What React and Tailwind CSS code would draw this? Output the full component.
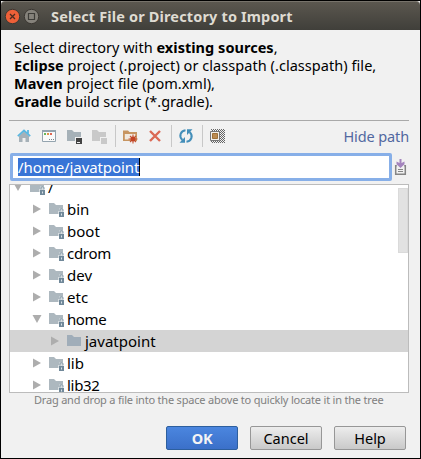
import React from "react";

function Folder({ locked, fill = "#adb8bf" }) {
  return (
    <svg width="16" height="16" viewBox="0 0 16 16" className="shrink-0">
      <path d="M0 2h5l2 2h7v9H0z" fill={fill} />
      {locked && (
        <g>
          <path d="M9 10h1V7.5h5V10h1v6H9z" fill="#fff" opacity=".5" />
          <path d="M11 10.5V8.8q0-1 1.5-1t1.5 1v1.7" fill="none" stroke="#7d93a2" />
          <path d="M10 11h5v5h-5z" fill="#71899a" />
          <path d="M12 12.5h1v2h-1z" fill="#dbe3e8" />
        </g>
      )}
    </svg>
  );
}

function Arrow({ open }) {
  return (
    <svg width="10" height="10" viewBox="0 0 10 10" className="shrink-0">
      <path d={open ? "M.5 1h9L5 9z" : "M1 .5v9L9 5z"} fill="#adadad" />
    </svg>
  );
}

function Row({ name, open, pad = "pl-[22px]", selected, locked = true, tracking = "tracking-normal" }) {
  return (
    <div className={`flex h-[22px] shrink-0 items-center ${pad} ${selected ? "bg-[#d4d4d4]" : ""}`}>
      <Arrow open={open} />
      <span className="ml-[7px] flex"><Folder locked={locked} fill={selected ? "#a0adb9" : "#adb8bf"} /></span>
      <span className={`ml-[2px] text-[15px] leading-[22px] ${tracking}`}>{name}</span>
    </div>
  );
}

const Divider = ({ className }) => <div className={`h-[22px] w-px shrink-0 bg-[#c8c8c8] ${className}`} />;

function Toolbar() {
  return (
    <div className="flex h-[30px] items-center pl-[8px]">
      <svg width="16" height="16" viewBox="0 0 16 16" className="-ml-px shrink-0">
        <path d="M3 8l5-4.5L13 8v6H9.5v-4h-3v4H3z" fill="#a6b1b8" />
        <path d="M1.8 8.2L8 2.5l6.2 5.7M12 2v4" fill="none" stroke="#5ab7e0" strokeWidth="1.8" />
      </svg>
      <svg width="16" height="16" viewBox="0 0 16 16" className="ml-[9px] shrink-0">
        <path d="M1.5 2.5h13v11h-13z" fill="#fafafa" stroke="#94a4af" />
        <path d="M1 2h14v2H1z" fill="#94a4af" />
        <path d="M3 5h2v2H3z" fill="#68b85e" />
        <path d="M6 5h2v2H6z" fill="#e39146" />
        <path d="M9 5h2v2H9z" fill="#df6753" />
        <path d="M8 11h1v1H8zM10 11h1v1h-1zM12 11h1v1h-1z" fill="#7a858c" />
      </svg>
      <svg width="16" height="16" viewBox="0 0 16 16" className="ml-[9px] shrink-0">
        <path d="M1 2h5l2 2h7v5H9v4H1z" fill="#a6b1b8" />
        <path d="M10 10h6v6h-6z" fill="#424242" />
        <path d="M11 14h3v1h-3z" fill="#eee" />
      </svg>
      <svg width="16" height="16" viewBox="0 0 16 16" className="ml-[9px] shrink-0">
        <path d="M1 2h5l2 2h7v5H9v4H1z" fill="#c9c9c9" />
        <path d="M10 10h6v6h-6z" fill="#c9c9c9" />
      </svg>
      <Divider className="ml-[8px]" />
      <svg width="16" height="16" viewBox="0 0 16 16" className="ml-[6px] shrink-0">
        <path d="M1 13V2.5h5L7.5 4H15v9z" fill="#c79561" />
        <path d="M2.8 11.5V6h10.5v5.5z" fill="#f1e9df" />
        <path d="M11 6.5v9M6.5 11h9M8 8l6 6M14 8l-6 6" stroke="#c45536" strokeWidth="1.1" />
        <circle cx="11" cy="11" r="2.5" fill="#c44324" />
      </svg>
      <svg width="16" height="16" viewBox="0 0 16 16" className="ml-[9px] shrink-0">
        <path d="M3 3l10 10M13 3L3 13" stroke="#db6955" strokeWidth="2.4" />
      </svg>
      <Divider className="ml-[8px]" />
      <svg width="16" height="16" viewBox="0 0 16 16" className="ml-[6px] shrink-0">
        <path d="M7.5 2.3C2.8 2.8.3 8.2 4.4 12M8.5 13.7c4.7-.5 7.2-5.9 3.1-9.7" fill="none" stroke="#438eb9" strokeWidth="2" />
        <path d="M1.5 14.8H7V9zM14.5 1.2H9V7z" fill="#438eb9" />
      </svg>
      <Divider className="ml-[8px]" />
      <svg width="16" height="16" viewBox="0 0 16 16" className="ml-[7px] shrink-0">
        <defs>
          <pattern id="dither" width="2" height="2" patternUnits="userSpaceOnUse">
            <path d="M0 0h1v1H0zM1 1h1v1H1z" fill="#666" />
          </pattern>
        </defs>
        <path d="M1 1h14v14H1z" fill="url(#dither)" shapeRendering="crispEdges" />
        <path d="M.5 3.5h9v9h-9z" fill="#f4f1ec" stroke="#777" />
        <path d="M2.5 5.5h5v5h-5z" fill="#bd8c51" stroke="#9f7138" />
      </svg>
      <span className="ml-auto whitespace-nowrap text-[14.5px] leading-[20px] tracking-[-0.12px] text-[#5168a0]">Hide path</span>
    </div>
  );
}

export default function App() {
  return (
    <div className="flex h-[459px] w-[421px] flex-col overflow-hidden border border-black bg-[#f1f1f1] font-['Noto_Sans',sans-serif] text-black">
      <header className="flex h-[29px] shrink-0 items-center rounded-t-[4px] border-t border-[#77736b] bg-linear-to-b from-[#5b574f] to-[#403f3a] pl-[3px]">
        <svg width="36" height="17" viewBox="0 0 36 17" className="shrink-0">
          <circle cx="8.5" cy="8.5" r="7.2" fill="#ee6038" stroke="#3b3732" />
          <path d="M6 6l5 5M11 6l-5 5" stroke="#4b2b20" strokeWidth="1.3" />
          <circle cx="27.5" cy="8.5" r="7.2" fill="#85827b" stroke="#3b3732" />
          <path d="M24.5 5.5h6v6h-6z" fill="none" stroke="#3d3c38" strokeWidth="1.2" />
        </svg>
        <h1 className="ml-[11px] whitespace-nowrap text-[14.5px] font-bold leading-[20px] tracking-[0.15px] text-[#dfdbd2]">Select File or Directory to Import</h1>
      </header>
      <main className="flex flex-col pl-[8px] pr-[11px]">
        <div className="h-[91px] whitespace-nowrap border-b border-[#a9a9a9] pl-[5px] pt-[8px] text-[14.5px] leading-[18px]">
          <p className="tracking-[0.03px]">Select directory with <b>existing sources</b>,</p>
          <p className="tracking-[0.05px]"><b>Eclipse</b> project (.project) or classpath (.classpath) file,</p>
          <p>
            <b>Maven</b> project file (pom.xml),
          </p>
          <p><b>Gradle</b> build script (*.gradle).</p>
        </div>
        <Toolbar />
        <div className="mt-[2px] flex h-[28px] items-center pl-px">
          <div className="flex h-[28px] w-[382px] shrink-0 items-center rounded-[2px] border-[3px] border-[#87afe8] bg-white pl-[5px]">
            <span className="flex h-[18px] items-center border-r border-black bg-[#3874d6] text-[15px] leading-[18px] tracking-[-0.08px] text-white">/home/javatpoint</span>
          </div>
          <svg width="14" height="18" viewBox="0 0 14 18" className="ml-[2px] shrink-0">
            <path d="M2.8 7.7H1.7v8.6h9.6V7.7h-1.1" fill="none" stroke="#858585" strokeWidth="1.5" />
            <path d="M4 11.5h5M4 13.5h5" stroke="#858585" />
            <path d="M5.5 1h2v4l3-1.5v2.8L6.5 10l-4-3.7V3.5l3 1.5z" fill="#a484bd" />
          </svg>
        </div>
        <div className="relative mt-[3px] flex h-[209px] w-[400px] flex-col overflow-hidden border border-[#bcbcbc] bg-white">
          <div className="-mt-[9px] flex flex-col">
            <Row name="/" open pad="pl-[3px]" />
            <Row name="bin" />
            <Row name="boot" />
            <Row name="cdrom" tracking="tracking-[-0.3px]" />
            <Row name="dev" />
            <Row name="etc" />
            <Row name="home" open tracking="tracking-[-0.4px]" />
            <Row name="javatpoint" pad="pl-[40px]" selected locked={false} />
            <Row name="lib" />
            <Row name="lib32" tracking="tracking-[-0.3px]" />
          </div>
          <div className="absolute right-0 top-[3px] h-[65px] w-[10px] border border-[#dadada] bg-[#e2e2e2]" />
        </div>
        <p className="h-[15px] whitespace-nowrap pl-[25px] text-[11px] leading-[14px] tracking-[-0.2px] text-[#808080]">Drag and drop a file into the space above to quickly locate it in the tree</p>
      </main>
      <footer className="mt-[18px] flex gap-[12px] pl-[165px] text-[14.5px] leading-[20px]">
        <button className="h-[24px] w-[72px] rounded-[2px] border border-[#2d5f9e] bg-linear-to-b from-[#4b86df] to-[#3b70c9] pb-px font-bold leading-[20px] tracking-[-0.4px] text-[#f4f4f4]">OK</button>
        <button className="h-[24px] w-[72px] rounded-[2px] border border-[#979797] bg-linear-to-b from-[#ededed] to-[#c9c9c9] leading-[20px]">Cancel</button>
        <button className="h-[24px] w-[72px] rounded-[2px] border border-[#979797] bg-linear-to-b from-[#ededed] to-[#c9c9c9] leading-[20px]">Help</button>
      </footer>
    </div>
  );
}
